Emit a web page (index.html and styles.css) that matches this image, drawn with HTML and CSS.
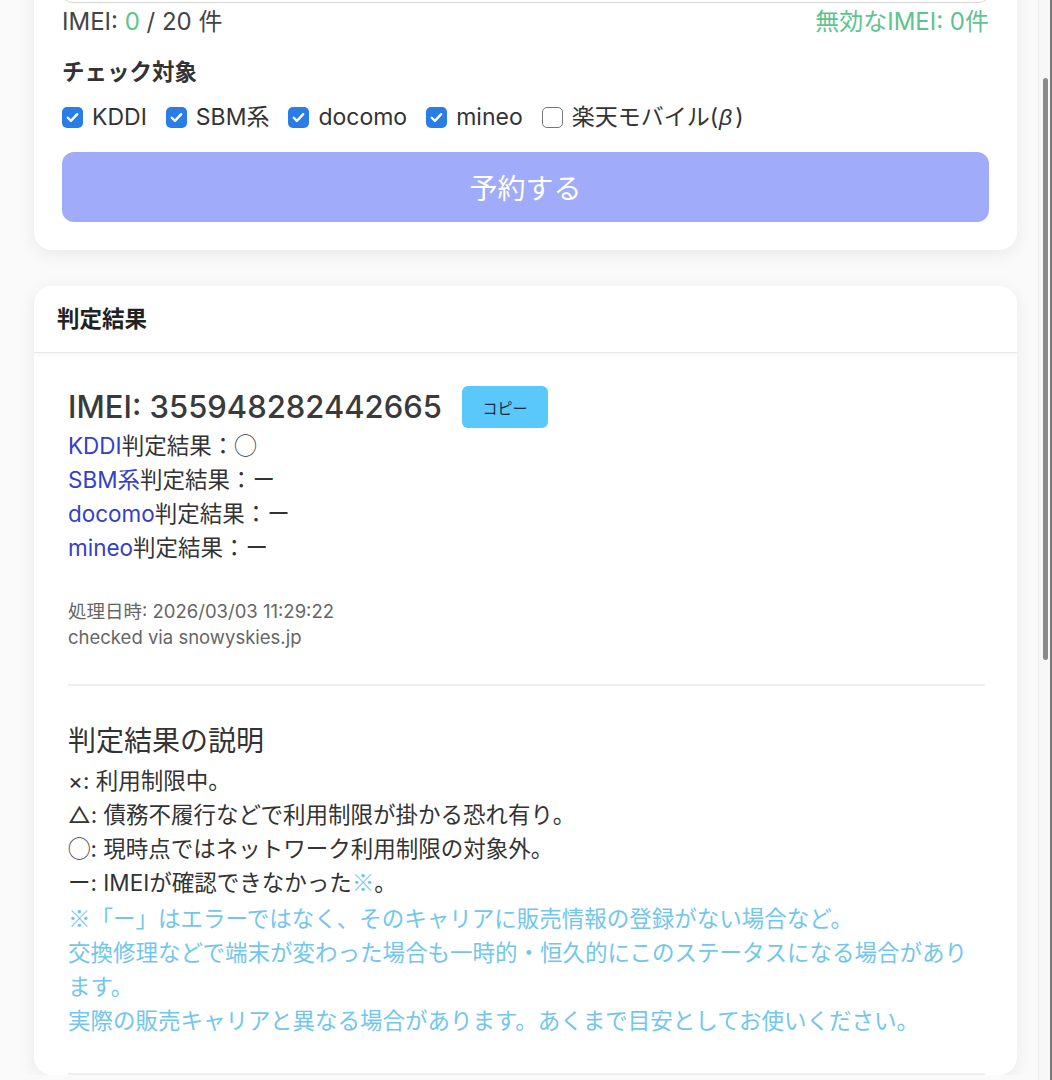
FILE: index.html
```html
<!DOCTYPE html>
<html lang="ja">
<head>
    <meta charset="UTF-8">
    <meta name="viewport" content="width=device-width, initial-scale=1.0">
    <title>IMEI 利用制限チェック</title>
    <link rel="stylesheet" href="styles.css">
</head>
<body>

    <div class="page">

        <!-- Input Card -->
        <div class="card form-card">
            <textarea class="imei-input" placeholder="IMEIを入力"></textarea>
            <div class="counts">
                <span>IMEI: <span class="ok">0</span> / 20 件</span>
                <span class="invalid">無効なIMEI: 0件</span>
            </div>

            <h3 class="target-title">チェック対象</h3>
            <div class="targets">
                <label class="check"><input type="checkbox" checked><span class="box"></span><span>KDDI</span></label>
                <label class="check"><input type="checkbox" checked><span class="box"></span><span>SBM系</span></label>
                <label class="check"><input type="checkbox" checked><span class="box"></span><span>docomo</span></label>
                <label class="check"><input type="checkbox" checked><span class="box"></span><span>mineo</span></label>
                <label class="check"><input type="checkbox"><span class="box"></span><span>楽天モバイル(<i>β</i>)</span></label>
            </div>

            <button class="button submit" disabled>予約する</button>
        </div>

        <!-- Result Card -->
        <div class="card result-card">
            <div class="card-header">判定結果</div>
            <div class="card-body">
                <div class="imei-row">
                    <span class="imei-no">IMEI: 355948282442665</span>
                    <button class="copy">コピー</button>
                </div>
                <div class="results">
                    <div><a href="#">KDDI</a>判定結果：<span class="cjk">◯</span></div>
                    <div><a href="#">SBM系</a>判定結果：ー</div>
                    <div><a href="#">docomo</a>判定結果：ー</div>
                    <div><a href="#">mineo</a>判定結果：ー</div>
                </div>
                <div class="meta">
                    <div>処理日時: 2026/03/03 11:29:22</div>
                    <div>checked via snowyskies.jp</div>
                </div>

                <hr>

                <h2 class="legend-title">判定結果の説明</h2>
                <div class="legend">
                    <div>×: 利用制限中。</div>
                    <div>△: 債務不履行などで利用制限が掛かる恐れ有り。</div>
                    <div><span class="cjk">◯</span>: 現時点ではネットワーク利用制限の対象外。</div>
                    <div>ー: IMEIが確認できなかった<span class="cjk note">※</span>。</div>
                    <div class="note">※「ー」はエラーではなく、そのキャリアに販売情報の登録がない場合など。<br>交換修理などで端末が変わった場合も一時的・恒久的にこのステータスになる場合があります。<br>実際の販売キャリアと異なる場合があります。あくまで目安としてお使いください。</div>
                </div>

                <hr>
            </div>
        </div>

    </div>

    <!-- scrollbar as seen in the screenshot -->
    <div class="scroll-track"><div class="scroll-thumb"></div></div>

</body>
</html>
```

FILE: styles.css
```css
/* CSS styles */
html { overflow: hidden; }
body { font-family: Inter, "Noto Sans CJK JP", sans-serif; margin: 0; background: #fafafa; color: #333; }
.page { padding: 0 35px 0 34px; margin-top: -128px; }
.note { font-family: "Noto Sans CJK JP", sans-serif; }
.cjk { font-family: "Noto Sans CJK JP", sans-serif; line-height: 0; }

.card { background: #fff; border-radius: 18px; box-shadow: 0 4px 18px rgba(0, 0, 0, 0.07); }
.form-card { padding: 28px; }
.imei-input { display: block; box-sizing: border-box; width: 100%; height: 103px; border: 1px solid #d6d6d6; border-radius: 10px; resize: none; font: inherit; }
.counts { display: flex; justify-content: space-between; font-size: 24px; line-height: 34px; margin-top: 2px; color: #444; }
.counts .ok, .counts .invalid { color: #5dc38f; }

.target-title { margin: 18px 0 0; font-size: 22.5px; line-height: 30px; font-weight: 600; color: #333; }
.targets { display: flex; gap: 19px; margin-top: 15px; font-size: 23px; line-height: 30px; color: #333; }
.check { display: flex; align-items: center; gap: 9px; }
.check input { display: none; }
.check i { font-family: "Liberation Sans", sans-serif; font-style: italic; padding: 0 3px 0 1px; }
.box { width: 21px; height: 21px; box-sizing: border-box; border: 1.5px solid #777; border-radius: 5px; }
.check input:checked + .box { border: none; background: #2a7ce6 url("data:image/svg+xml,%3Csvg xmlns='http://www.w3.org/2000/svg' viewBox='0 0 20 20'%3E%3Cpath d='M5.5 10.2l3 3 6-6.4' fill='none' stroke='white' stroke-width='2.2' stroke-linecap='round' stroke-linejoin='round'/%3E%3C/svg%3E") center / 100% no-repeat; }

.button { font: inherit; border: none; cursor: pointer; }
.submit { display: block; width: 100%; height: 70px; margin-top: 20px; border-radius: 12px; background: #a0abfa; color: #fff; font-size: 28px; }

.result-card { margin-top: 36px; overflow: hidden; }
.card-header { padding: 0 23px; height: 66px; line-height: 66px; font-size: 22.5px; font-weight: 600; color: #222; border-bottom: 1px solid #e8e8e8; box-shadow: 0 2px 4px rgba(0, 0, 0, 0.04); }
.card-body { padding: 33px 32px 0 34px; }

.imei-row { display: flex; align-items: center; gap: 20px; }
.imei-no { font-size: 31px; line-height: 40px; font-weight: 500; color: #3a3a3a; }
.copy { font: inherit; font-size: 15px; width: 86px; height: 42px; border: none; border-radius: 6px; background: #5ac8fa; color: #1c2a44; }

.results { margin-top: 1px; font-size: 22.5px; line-height: 34px; color: #333; }
.results a { color: #3340c9; text-decoration: none; }

.meta { margin-top: 33px; font-size: 18.5px; line-height: 26px; color: #666; }

hr { border: none; border-top: 2px solid #eeeeee; margin: 34px 0 0; }

.legend-title { margin: 32px 0 0; font-size: 28px; line-height: 46px; font-weight: 400; color: #333; }
.legend { font-size: 22.5px; line-height: 34px; color: #333; }
.note { color: #72c6ec; }
.legend + hr { margin-top: 37px; }

.scroll-track { position: fixed; top: 0; right: 0; width: 14px; height: 100%; background: #f7f7f7; border-left: 1px solid #eee; border-right: 2px solid #777; box-sizing: border-box; }
.scroll-thumb { position: absolute; top: 78px; left: 4px; width: 5px; height: 582px; border-radius: 3px; background: #8a8a8a; }
```
